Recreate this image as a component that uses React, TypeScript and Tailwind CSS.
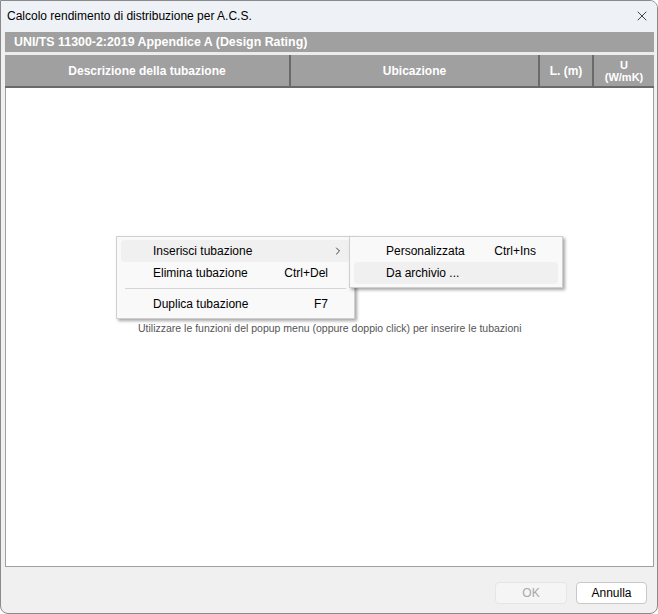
import { X, ChevronRight } from 'lucide-react';

const ui = { fontFamily: '"Segoe UI", "Liberation Sans", Arial, sans-serif' };
const tahoma = { fontFamily: 'Tahoma, "Liberation Sans", Arial, sans-serif' };

function MenuItem({
  label,
  shortcut,
  active,
  arrow
}: {
  label: string;
  shortcut?: string;
  active?: boolean;
  arrow?: boolean;
}) {
  return (
    <div
      className={`flex items-center h-[22px] mx-[4px] rounded-[4px] text-[12px] text-black ${active ? 'bg-[#f0f0f0]' : ''}`}
    >
      <span className="pl-[32px] flex-1">{label}</span>
      {shortcut && <span className="pr-[22px]">{shortcut}</span>}
      {arrow && (
        <span className="w-[18px] flex items-center">
          <ChevronRight className="w-[12px] h-[12px]" strokeWidth={1.5} />
        </span>
      )}
    </div>
  );
}

export default function App() {
  return (
    <div className="w-[658px] h-[614px] bg-white" style={ui}>
      <div className="w-full h-full flex flex-col border border-[#8a8a8a] rounded-tr-[8px] rounded-b-[8px] bg-[#f0f0f0] overflow-hidden relative">
        {/* Barra titolo */}
        <div className="h-[30px] flex items-center justify-between bg-[#eef2f7] pl-[6px] pr-[7px]">
          <span className="text-[12px] text-black">Calcolo rendimento di distribuzione per A.C.S.</span>
          <X className="w-[16px] h-[16px] text-black" strokeWidth={1.1} />
        </div>

        {/* Corpo */}
        <div className="flex-1 flex flex-col pl-[4px] pr-[3px] pt-[1px]">
          <div
            className="h-[20px] bg-[#a0a0a0] text-white font-bold text-[12.4px] flex items-center pl-[9px]"
            style={tahoma}
          >
            UNI/TS 11300-2:2019 Appendice A (Design Rating)
          </div>
          <div className="h-[3px] bg-[#ececec]" />
          <div
            className="h-[33px] bg-[#a0a0a0] text-white font-bold text-[12px] flex border-b-2 border-[#6a6a6a]"
            style={tahoma}
          >
            <div className="w-[286px] flex items-center justify-center border-r-2 border-[#6a6a6a]">
              Descrizione della tubazione
            </div>
            <div className="w-[249px] flex items-center justify-center border-r-2 border-[#6a6a6a]">
              Ubicazione
            </div>
            <div className="w-[54px] flex items-center justify-center border-r-2 border-[#6a6a6a]">
              L. (m)
            </div>
            <div className="flex-1 flex flex-col items-center justify-center leading-[12px] text-[11px]">
              <span>U</span>
              <span>(W/mK)</span>
            </div>
          </div>
          <div className="h-[479px] bg-white border-x border-b border-[#a0a0a0] relative">
            <div
              className="absolute left-[132px] top-[233px] text-[10.5px] text-[#555]"
              style={tahoma}
            >
              Utilizzare le funzioni del popup menu (oppure doppio click) per inserire le tubazioni
            </div>
          </div>

          {/* Pulsanti */}
          <div className="flex-1 flex items-center justify-end gap-[9px] pr-[7px] pt-[6px]">
            <div className="w-[72px] h-[22px] rounded-[4px] border border-[#e5e5e5] bg-[#f5f5f5] text-[#a8a8a8] text-[12px] flex items-center justify-center">
              OK
            </div>
            <div className="w-[71px] h-[22px] rounded-[4px] border border-[#c8c8c8] bg-white text-black text-[12px] flex items-center justify-center">
              Annulla
            </div>
          </div>
        </div>

        {/* Menu popup */}
        <div className="absolute left-[115px] top-[235px] w-[239px] bg-[#f9f9f9] border border-[#cfcfcf] py-[3px] shadow-[2px_2px_3px_rgba(0,0,0,0.35)]">
          <MenuItem label="Inserisci tubazione" active arrow />
          <MenuItem label="Elimina tubazione" shortcut="Ctrl+Del" />
          <div className="h-[1px] bg-[#d5d5d5] mx-[8px] my-[4px]" />
          <MenuItem label="Duplica tubazione" shortcut="F7" />
        </div>

        {/* Sottomenu */}
        <div className="absolute left-[348px] top-[235px] w-[214px] bg-[#f9f9f9] border border-[#cfcfcf] py-[3px] shadow-[2px_2px_3px_rgba(0,0,0,0.35)]">
          <MenuItem label="Personalizzata" shortcut="Ctrl+Ins" />
          <MenuItem label="Da archivio ..." active />
        </div>
      </div>
    </div>
  );
}
